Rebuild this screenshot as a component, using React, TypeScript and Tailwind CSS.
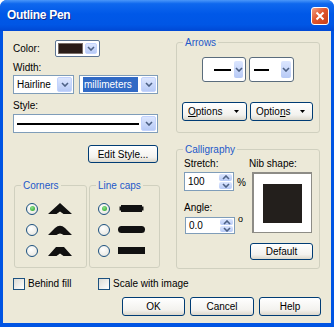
import React from "react";

const ui = "font-['Liberation_Sans',Arial,sans-serif] text-[10px] leading-[13px] text-black";

function Chevron({ up = false }: { up?: boolean }) {
  return (
    <svg width="8" height="5" viewBox="0 0 8 5">
      <path
        d={up ? "M1 4L4 1L7 4" : "M1 1L4 4L7 1"}
        fill="none"
        stroke="#4D6185"
        strokeWidth="1.6"
      />
    </svg>
  );
}

function ArrowBox({ className = "" }: { className?: string }) {
  return (
    <div
      className={`flex items-center justify-center rounded-[2px] border border-[#C3D3FD] bg-[linear-gradient(#DCE6FE,#B7CAF6)] ${className}`}
    >
      <Chevron />
    </div>
  );
}

function Combo({ className = "", children }: { className?: string; children?: React.ReactNode }) {
  return (
    <div className={`flex items-stretch border border-[#7F9DB9] bg-white p-[1px] ${className}`}>
      <div className="flex min-w-0 flex-1 items-center">{children}</div>
      <ArrowBox className="w-[15px]" />
    </div>
  );
}

function XpButton({ className = "", children }: { className?: string; children?: React.ReactNode }) {
  return (
    <div
      className={`flex items-center rounded-[3px] border border-[#003C74] bg-[linear-gradient(#FFFFFF,#F3F2EE_70%,#DCD8CC)] ${className}`}
    >
      {children}
    </div>
  );
}

function OptionsButton({ label }: { label: React.ReactNode }) {
  return (
    <XpButton className="h-full w-full justify-between pl-[5px] pr-[7px]">
      <span>{label}</span>
      <svg width="5" height="3" viewBox="0 0 5 3">
        <path d="M0 0H5L2.5 3Z" fill="#000" />
      </svg>
    </XpButton>
  );
}

function Group({
  title,
  className = "",
  children,
}: {
  title: string;
  className?: string;
  children?: React.ReactNode;
}) {
  return (
    <fieldset className={`rounded-[3px] border border-[#D0D0BF] ${className}`}>
      <legend className="ml-[6px] px-[2px] text-[#2358C9]">{title}</legend>
      {children}
    </fieldset>
  );
}

function Radio({ checked = false }: { checked?: boolean }) {
  return (
    <div className="flex h-[12px] w-[12px] items-center justify-center rounded-full border border-[#1C5180] bg-[radial-gradient(circle_at_40%_35%,#FFFFFF,#E3E2DA)]">
      {checked && (
        <div className="h-[5px] w-[5px] rounded-full bg-[radial-gradient(circle_at_40%_35%,#8DE08D,#21A121)]" />
      )}
    </div>
  );
}

function Checkbox() {
  return (
    <div className="h-[12px] w-[12px] border border-[#1C5180] bg-[linear-gradient(135deg,#DCDBD5,#FFFFFF)]" />
  );
}

function SpinInput({ value, className = "" }: { value: string; className?: string }) {
  return (
    <div className={`flex items-stretch border border-[#7F9DB9] bg-white p-[1px] ${className}`}>
      <div className="flex flex-1 items-center pl-[2px]">{value}</div>
      <div className="flex w-[13px] flex-col gap-[1px]">
        <div className="flex flex-1 items-center justify-center rounded-[2px] bg-[linear-gradient(#DCE6FE,#B7CAF6)]">
          <Chevron up />
        </div>
        <div className="flex flex-1 items-center justify-center rounded-[2px] bg-[linear-gradient(#DCE6FE,#B7CAF6)]">
          <Chevron />
        </div>
      </div>
    </div>
  );
}

// miter / round / bevel joins
const corners = [
  "M0 12L12 1L24 12H15.5L12 9.5L8.5 12Z",
  "M0 12L7 5Q12 0.5 17 5L24 12H15.5Q12 9 8.5 12Z",
  "M0 12L8 3H16L24 12H15.5L12 9.5L8.5 12Z",
];

function CapIcon({ kind }: { kind: number }) {
  return (
    <svg width="29" height="9" viewBox="0 0 29 9">
      {kind === 0 && <path d="M4 1H25V2.5H26.5V6.5H25V8H4V6.5H2.5V2.5H4Z" fill="#111" />}
      {kind === 1 && <rect x="1" y="1" width="27" height="7" rx="3.5" fill="#111" />}
      {kind === 2 && <rect x="1" y="1" width="27" height="7" fill="#111" />}
    </svg>
  );
}

export default function App() {
  return (
    <div className={`flex h-[327px] w-[334px] flex-col overflow-hidden rounded-t-[7px] bg-[#0054E3] ${ui}`}>
      {/* title bar */}
      <div className="flex h-[31px] items-center bg-[linear-gradient(#4A97F9_0%,#0F68EE_12%,#0058E8_45%,#0056E5_80%,#0048D4_100%)] pl-[7px] pr-[5px]">
        <span className="flex-1 text-[12px] font-bold tracking-[-0.3px] text-white [text-shadow:1px_1px_0_#0A2A8A]">
          Outline Pen
        </span>
        <div className="flex h-[18px] w-[18px] items-center justify-center rounded-[3px] border border-white bg-[linear-gradient(135deg,#F2A186,#E1562D_45%,#C7401C)]">
          <svg width="10" height="10" viewBox="0 0 10 10">
            <path d="M1.5 1.5L8.5 8.5M8.5 1.5L1.5 8.5" stroke="#fff" strokeWidth="2" />
          </svg>
        </div>
      </div>

      {/* body */}
      <div className="mx-[3px] mb-[4px] flex flex-1 flex-col bg-[#ECE9D8]">
        <div className="flex pl-[10px] pt-[5px]">
          {/* left column */}
          <div className="flex w-[147px] flex-col">
            <div className="mt-[3px] flex h-[18px] items-center">
              <span className="w-[42px]">Color:</span>
              <div className="flex h-[17px] w-[45px] items-stretch gap-[2px] rounded-[2px] border border-[#5E7593] bg-white p-[2px]">
                <div className="flex-1 border border-[#7A6E68] bg-[#2A1C18]" />
                <ArrowBox className="w-[12px]" />
              </div>
            </div>
            <div className="mt-[4px]">Width:</div>
            <div className="mt-[1px] flex h-[19px] gap-[5px]">
              <Combo className="w-[61px]">
                <span className="pl-[2px]">Hairline</span>
              </Combo>
              <Combo className="w-[79px]">
                <span className="ml-[2px] flex h-full flex-1 items-center bg-[#316AC5] pl-[1px] text-white">
                  millimeters
                </span>
                <span className="w-[3px]" />
              </Combo>
            </div>
            <div className="mt-[5px]">Style:</div>
            <Combo className="mt-[2px] h-[19px] w-[145px]">
              <div className="mx-[2px] h-[2px] flex-1 bg-black" />
            </Combo>
            <XpButton className="mr-[2px] mt-[12px] h-[18px] w-[70px] justify-center self-end">
              Edit Style...
            </XpButton>
            <div className="ml-[1px] mt-[16px] flex h-[89px] gap-[2px]">
              <Group title="Corners" className="w-[73px]">
                <div className="mt-[6px] flex flex-col pl-[11px]">
                  {corners.map((d, i) => (
                    <div key={i} className="flex h-[21px] items-center gap-[10px]">
                      <Radio checked={i === 0} />
                      <svg width="24" height="13" viewBox="0 0 24 13">
                        <path d={d} fill="#111" />
                      </svg>
                    </div>
                  ))}
                </div>
              </Group>
              <Group title="Line caps" className="w-[71px]">
                <div className="mt-[6px] flex flex-col pl-[8px]">
                  {[0, 1, 2].map((i) => (
                    <div key={i} className="flex h-[21px] items-center gap-[7px]">
                      <Radio checked={i === 0} />
                      <CapIcon kind={i} />
                    </div>
                  ))}
                </div>
              </Group>
            </div>
          </div>

          {/* right column */}
          <div className="ml-[16px] flex w-[144px] flex-col">
            <Group title="Arrows" className="h-[97px]">
              <div className="mt-[8px] flex h-[25px] justify-center gap-[3px]">
                <div className="flex w-[44px] items-center rounded-[3px] border border-[#5A6C7C] bg-white py-[3px] pl-[11px] pr-[2px]">
                  <div className="h-[2px] w-[17px] bg-black" />
                  <ArrowBox className="ml-[3px] h-full w-[9px] border-0" />
                </div>
                <div className="flex w-[45px] items-center rounded-[3px] border border-[#5A6C7C] bg-white py-[3px] pl-[4px] pr-[2px]">
                  <div className="h-[2px] w-[15px] bg-black" />
                  <div className="flex-1" />
                  <ArrowBox className="h-full w-[10px] border-0" />
                </div>
              </div>
              <div className="mt-[20px] flex h-[19px] gap-[3px] pl-[5px]">
                <div className="w-[65px]">
                  <OptionsButton label={<><u>O</u>ptions</>} />
                </div>
                <div className="w-[63px]">
                  <OptionsButton label={<>Optio<u>n</u>s</>} />
                </div>
              </div>
            </Group>
            <Group title="Calligraphy" className="mt-[10px] h-[126px]">
              <div className="flex pl-[7px]">
                <div className="flex w-[62px] flex-col">
                  <div className="mt-[1px]">Stretch:</div>
                  <div className="mt-[2px] flex items-center">
                    <SpinInput value="100" className="h-[19px] w-[51px]" />
                    <span className="ml-[3px] mt-[2px]">%</span>
                  </div>
                  <div className="mt-[10px]">Angle:</div>
                  <div className="mt-[3px] flex items-start">
                    <SpinInput value="0.0" className="ml-[1px] h-[17px] w-[50px]" />
                    <span className="ml-[3px] mt-[-4px] text-[9px]">o</span>
                  </div>
                </div>
                <div className="ml-[3px] flex flex-col">
                  <div className="mt-[1px]">Nib shape:</div>
                  <div className="ml-[3px] mt-[2px] flex h-[61px] w-[60px] items-center justify-center border-l-2 border-t-2 border-[#8D8C86] border-b border-r bg-white">
                    <div className="h-[39px] w-[39px] bg-[#231F1C]" />
                  </div>
                  <XpButton className="ml-[1px] mt-[10px] h-[17px] w-[63px] justify-center">Default</XpButton>
                </div>
              </div>
            </Group>
          </div>
        </div>

        <div className="mt-[8px] flex h-[13px] items-center pl-[10px]">
          <div className="flex w-[85px] items-center gap-[3px]">
            <Checkbox />
            <span>Behind fill</span>
          </div>
          <div className="flex items-center gap-[3px]">
            <Checkbox />
            <span>Scale with image</span>
          </div>
        </div>

        <div className="ml-[119px] mt-[7px] flex h-[19px] gap-[5px]">
          <XpButton className="w-[63px] justify-center">OK</XpButton>
          <XpButton className="w-[64px] justify-center">Cancel</XpButton>
          <XpButton className="w-[62px] justify-center">Help</XpButton>
        </div>
      </div>
    </div>
  );
}
